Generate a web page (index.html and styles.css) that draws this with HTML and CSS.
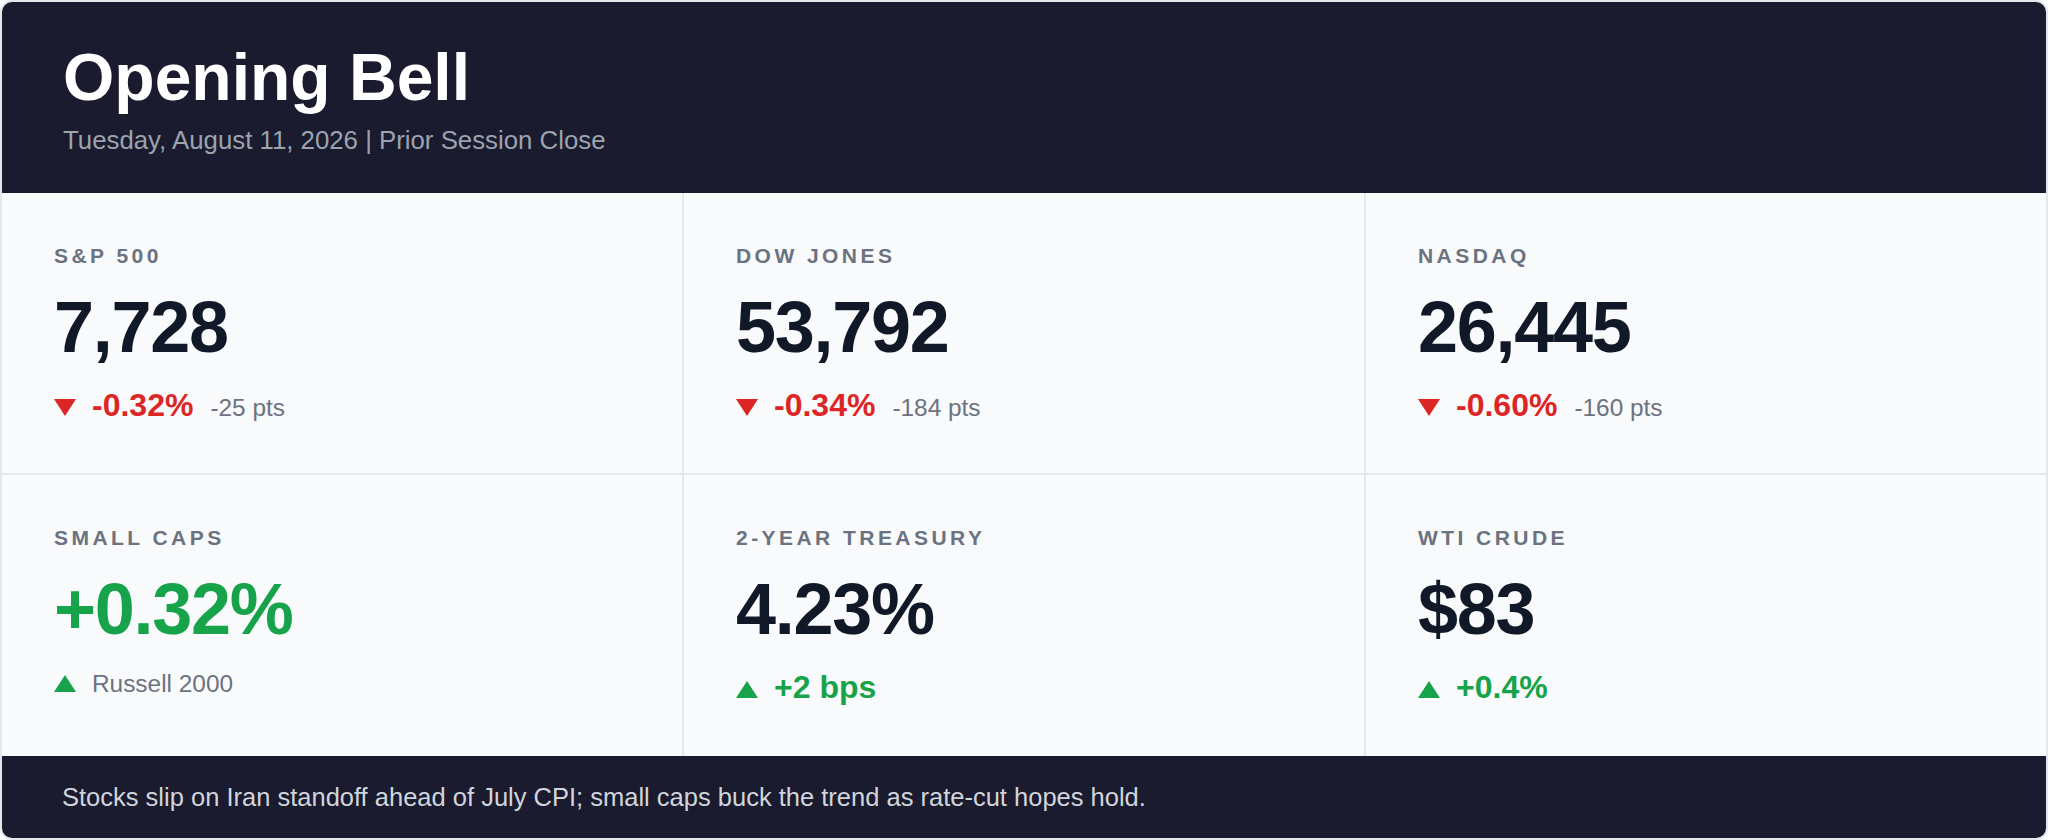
FILE: index.html
```html
<!DOCTYPE html>
<html lang="en">
<head>
<meta charset="utf-8">
<title>Opening Bell</title>
<link rel="stylesheet" href="styles.css">
</head>
<body>
<div class="card">
  <header class="header">
    <h1 class="title">Opening Bell</h1>
    <p class="subtitle">Tuesday, August 11, 2026 | Prior Session Close</p>
  </header>
  <main class="grid">
    <section class="cell">
      <div class="label">S&amp;P 500</div>
      <div class="value">7,728</div>
      <div class="change">
        <svg class="tri" width="22" height="17" viewBox="0 0 22 17"><polygon class="down" points="0,0 22,0 11,17"/></svg>
        <span class="pct down-text">-0.32%</span>
        <span class="pts">-25 pts</span>
      </div>
    </section>
    <section class="cell">
      <div class="label">Dow Jones</div>
      <div class="value">53,792</div>
      <div class="change">
        <svg class="tri" width="22" height="17" viewBox="0 0 22 17"><polygon class="down" points="0,0 22,0 11,17"/></svg>
        <span class="pct down-text">-0.34%</span>
        <span class="pts">-184 pts</span>
      </div>
    </section>
    <section class="cell">
      <div class="label">Nasdaq</div>
      <div class="value">26,445</div>
      <div class="change">
        <svg class="tri" width="22" height="17" viewBox="0 0 22 17"><polygon class="down" points="0,0 22,0 11,17"/></svg>
        <span class="pct down-text">-0.60%</span>
        <span class="pts">-160 pts</span>
      </div>
    </section>
    <section class="cell">
      <div class="label">Small Caps</div>
      <div class="value up-text">+0.32%</div>
      <div class="change">
        <svg class="tri" width="22" height="17" viewBox="0 0 22 17"><polygon class="up" points="11,0 22,17 0,17"/></svg>
        <span class="note">Russell 2000</span>
      </div>
    </section>
    <section class="cell">
      <div class="label">2-Year Treasury</div>
      <div class="value">4.23%</div>
      <div class="change">
        <svg class="tri" width="22" height="17" viewBox="0 0 22 17"><polygon class="up" points="11,0 22,17 0,17"/></svg>
        <span class="pct up-text">+2 bps</span>
      </div>
    </section>
    <section class="cell">
      <div class="label">WTI Crude</div>
      <div class="value">$83</div>
      <div class="change">
        <svg class="tri" width="22" height="17" viewBox="0 0 22 17"><polygon class="up" points="11,0 22,17 0,17"/></svg>
        <span class="pct up-text">+0.4%</span>
      </div>
    </section>
  </main>
  <footer class="footer">
    <p class="summary">Stocks slip on Iran standoff ahead of July CPI; small caps buck the trend as rate-cut hopes hold.</p>
  </footer>
</div>
</body>
</html>
```

FILE: styles.css
```css
* {
  box-sizing: border-box;
}

html, body {
  margin: 0;
  padding: 0;
  background: #ffffff;
}

body {
  font-family: "Liberation Sans", Arial, Helvetica, sans-serif;
  width: 2048px;
  height: 840px;
  overflow: hidden;
}

.card {
  width: 2048px;
  height: 840px;
  border: 2px solid #e5e7eb;
  border-radius: 12px;
  overflow: hidden;
  display: flex;
  flex-direction: column;
  background: #f9fafb;
}

.header {
  background: #1a1b2e;
  padding: 37px 61px 35px;
  flex-shrink: 0;
}

.title {
  margin: 0;
  font-size: 66px;
  line-height: 76.8px;
  font-weight: 700;
  color: #ffffff;
}

.subtitle {
  margin: 6px 0 0;
  font-size: 25.8px;
  line-height: 36px;
  color: #9ca3af;
}

.grid {
  flex: 1;
  min-height: 0;
  display: grid;
  grid-template-columns: repeat(3, 1fr);
  grid-template-rows: 1fr 1fr;
  gap: 2px;
  background: #e5e7eb;
}

.cell {
  background: #f9fafb;
  padding: 51px 52px 46px;
}

.label {
  font-size: 21px;
  line-height: 24px;
  font-weight: 700;
  letter-spacing: 3.45px;
  text-transform: uppercase;
  color: #6b7280;
}

.value {
  margin-top: 23px;
  font-size: 72px;
  line-height: 72px;
  font-weight: 700;
  letter-spacing: -1.3px;
  color: #111827;
}

.change {
  margin-top: 23px;
  display: flex;
  align-items: baseline;
  gap: 16px;
  line-height: 1.2;
}

.tri {
  display: block;
  flex-shrink: 0;
}

.down {
  fill: #dc2626;
}

.up {
  fill: #16a34a;
}

.pct {
  font-size: 32px;
  font-weight: 700;
}

.down-text {
  color: #dc2626;
}

.up-text {
  color: #16a34a;
}

.pts,
.note {
  font-size: 24.4px;
  color: #6b7280;
}

.pts {
  margin-left: 1px;
}

.note {
  margin-top: 1px;
}

.footer {
  background: #1a1b2e;
  padding: 23px 60px;
  flex-shrink: 0;
  height: 82px;
}

.summary {
  margin: 0;
  font-size: 25.5px;
  line-height: 36px;
  color: #d1d5db;
}
```
